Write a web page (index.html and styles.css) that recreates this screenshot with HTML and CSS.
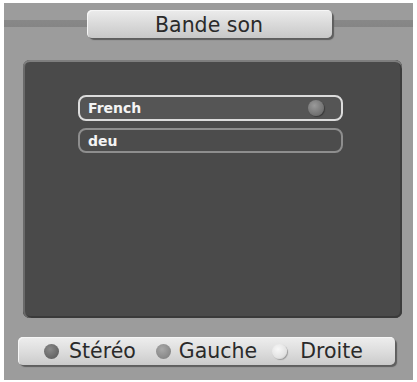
FILE: index.html
```html
<!DOCTYPE html>
<html>
<head>
<meta charset="utf-8">
<link rel="stylesheet" href="styles.css">
</head>
<body>
<div class="frame">
  <div class="header">
    <div class="title">Bande son</div>
  </div>
  <div class="panel">
    <div class="row selected"><span>French</span><span class="knob"></span></div>
    <div class="row"><span>deu</span></div>
  </div>
  <div class="footer">
    <span class="dot dot-a"></span><span class="label">Stéréo</span>
    <span class="dot dot-b"></span><span class="label">Gauche</span>
    <span class="dot dot-c"></span><span class="label">Droite</span>
  </div>
</div>
</body>
</html>
```
FILE: styles.css
```css
html, body { margin: 0; padding: 0; background: #fff; }
body { width: 417px; height: 382px; overflow: hidden; font-family: "DejaVu Sans", Verdana, sans-serif; }
.frame {
  margin: 3px 4px 2px 4px;
  width: 409px;
  height: 377px;
  background: #9c9c9c;
  display: flex;
  flex-direction: column;
  box-sizing: border-box;
  padding-top: 7px;
}
.header {
  height: 28px;
  display: flex;
  justify-content: center;
  background: linear-gradient(to bottom, transparent 10px, #888 10px, #858585 17px, transparent 17px);
  padding-left: 1px;
}
.title {
  width: 245px;
  height: 28px;
  box-sizing: border-box;
  border-radius: 5px;
  background: linear-gradient(to bottom, #ececec, #d6d6d6 60%, #c8c8c8);
  box-shadow: 2px 2px 1px #5e5e5e, inset 1px 1px 0 #f6f6f6;
  display: flex;
  align-items: center;
  justify-content: center;
  font-size: 20.5px;
  color: #2a2a2a;
  padding-top: 1px;
}
.panel {
  margin: 22px 11px 0 19px;
  height: 258px;
  background: #4a4a4a;
  border-radius: 7px;
  box-shadow: inset 0 2px 0 #7e7e7e, inset 2px 0 0 #6a6a6a, inset -2px 0 0 #3c3c3c, inset 0 -2px 0 #3a3a3a;
  box-sizing: border-box;
  padding: 35px 0 0 55px;
  display: flex;
  flex-direction: column;
  gap: 7px;
}
.row {
  width: 265px;
  height: 25px;
  box-sizing: border-box;
  border: 2px solid #8e8e8e;
  border-radius: 8px;
  display: flex;
  align-items: center;
  justify-content: space-between;
  padding: 0 7px 0 8px;
  color: #f4f4f4;
  font-weight: bold;
  font-size: 14px;
  background: #4c4c4c;
}
.row.selected {
  height: 26px;
  border-color: #dcdcdc;
  background: #555;
}
.knob {
  width: 16px;
  height: 16px;
  border-radius: 50%;
  background: radial-gradient(circle at 40% 35%, #9a9a9a, #707070 70%, #5a5a5a);
  box-shadow: 1px 1px 1px #3a3a3a;
  margin-right: 10px;
}
.footer {
  margin: 19px 0 0 14px;
  width: 377px;
  height: 28px;
  box-sizing: border-box;
  border-radius: 5px;
  background: linear-gradient(to bottom, #eeeeee, #dadada 60%, #cacaca);
  box-shadow: 2px 2px 1px #5e5e5e, inset 1px 1px 0 #f6f6f6;
  display: flex;
  align-items: center;
  padding-left: 26px;
  font-size: 20.5px;
  color: #2a2a2a;
}
.dot {
  width: 15px;
  height: 15px;
  border-radius: 50%;
  flex: none;
  margin-right: 10px;
}
.dot-a { background: radial-gradient(circle at 40% 35%, #8a8a8a, #656565 70%); }
.dot-b { background: radial-gradient(circle at 40% 35%, #a8a8a8, #888 70%); margin-left: 20px; margin-right: 8px; }
.dot-c { background: radial-gradient(circle at 40% 35%, #f8f8f8, #e2e2e2 65%, #a8a8a8); box-shadow: 1px 1px 1px #9a9a9a; margin-left: 15px; margin-right: 13px; }
.label { line-height: 1; }
```
